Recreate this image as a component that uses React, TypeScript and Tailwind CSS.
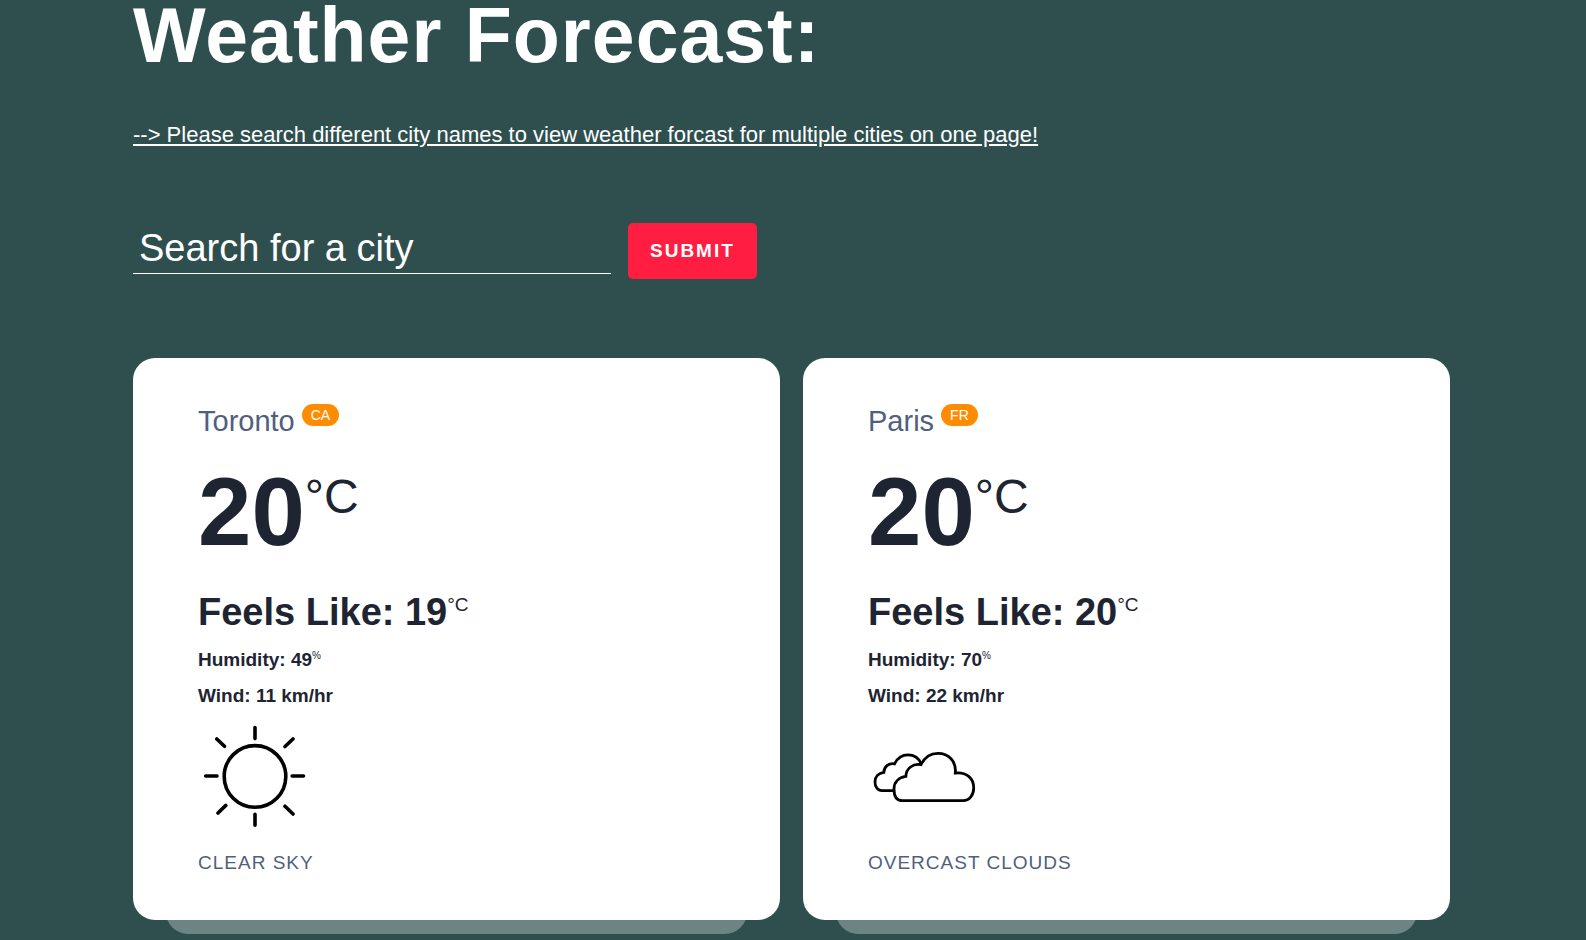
import React from 'react';

type Condition = 'clear' | 'clouds';

interface City {
  name: string;
  country: string;
  temp: number;
  feelsLike: number;
  humidity: number;
  wind: number;
  condition: Condition;
  description: string;
}

const cities: City[] = [
  {
    name: 'Toronto',
    country: 'CA',
    temp: 20,
    feelsLike: 19,
    humidity: 49,
    wind: 11,
    condition: 'clear',
    description: 'clear sky',
  },
  {
    name: 'Paris',
    country: 'FR',
    temp: 20,
    feelsLike: 20,
    humidity: 70,
    wind: 22,
    condition: 'clouds',
    description: 'overcast clouds',
  },
];

function SunIcon() {
  return (
    <svg
      viewBox="0 0 115 115"
      className="size-[115px]"
      fill="none"
      stroke="#000"
      strokeWidth="3.6"
      strokeLinecap="round"
      aria-hidden="true"
    >
      <circle cx="57" cy="57.4" r="30.8" />
      <path d="M57 8.6V19.6M57 95.2V106.2M7.7 57H19M94.2 57H105.5M18.8 20L26.5 27.3M95 20L87 27.5M20 94L27.8 86.4M87 87.2L95 95" />
    </svg>
  );
}

function CloudsIcon() {
  return (
    <svg
      viewBox="0 0 115 115"
      className="size-[115px]"
      fill="none"
      stroke="#000"
      strokeWidth="2.8"
      strokeLinejoin="miter"
      aria-hidden="true"
    >
      <path d="M26 71.7H14C9.5 71.7 7 67.4 7 62.9C7 57.9 10.5 54.1 15.8 53.4C16 47.9 20.5 43.8 26.5 44.9C29.5 38.9 34.5 35.9 40 35.9C45.5 35.9 50.5 38.9 53 44.4" />
      <path d="M34.5 81.7H95C101.5 81.7 105.7 75.9 105.7 68.9C105.7 59.4 98.5 52.7 87.3 54C88.5 42.4 80.5 34.3 70 34.3C62.5 34.3 56.5 38.4 53 45.7C45 44.2 38 49.4 37.9 57.4C31 58.4 26 62.9 26 69.9C26 76.9 28.5 81.7 34.5 81.7Z" />
    </svg>
  );
}

function CityCard({ city }: { city: City }) {
  return (
    <li className="relative rounded-[22px] bg-white px-[65px] pt-[45px] pb-[46px] text-[#1e2432] after:absolute after:inset-x-[33px] after:-bottom-3.5 after:-z-10 after:h-12 after:rounded-[22px] after:bg-white/30 after:content-['']">
      <h2 className="flex items-start gap-[7px] text-[29px] leading-9 text-[#4f5f80]">
        <span>{city.name}</span>
        <span className="mt-px rounded-full bg-[#ff8c00] px-[9px] text-sm leading-[22px] text-white">
          {city.country}
        </span>
      </h2>
      <p className="mt-[19px] flex items-start text-[96px] leading-[108px] font-bold">
        <span>{city.temp}</span>
        <span className="text-[48px] leading-[78px] font-normal">°C</span>
      </p>
      <h3 className="mt-6 flex items-start text-[38px] leading-[44px] font-bold">
        <span>Feels Like: {city.feelsLike}</span>
        <span className="text-[19px] leading-[30px] font-normal">°C</span>
      </h3>
      <p className="mt-[15px] flex items-start text-[19px] leading-[22px] font-bold">
        <span>Humidity: {city.humidity}</span>
        <span className="text-[10px] leading-[14px] font-normal">%</span>
      </p>
      <p className="mt-[14px] text-[19px] leading-[22px] font-bold">Wind: {city.wind} km/hr</p>
      <div className="mt-3">{city.condition === 'clear' ? <SunIcon /> : <CloudsIcon />}</div>
      <p className="mt-[18px] text-[19px] leading-[22px] tracking-[1px] text-[#4f5f80] uppercase">
        {city.description}
      </p>
    </li>
  );
}

export default function App() {
  return (
    <div className="min-h-screen bg-[#2f4f4f] pr-[136px] pb-5 pl-[133px] font-['Liberation_Sans',Arial,sans-serif] text-white">
      <h1 className="text-[77px] leading-[70px] font-bold tracking-[1px]">Weather Forecast:</h1>
      <p className="mt-[52px] text-[22px] leading-[26px] underline">
        --&gt; Please search different city names to view weather forcast for multiple cities on one page!
      </p>
      <form className="mt-[75px] flex items-start gap-[17px]" onSubmit={(e) => e.preventDefault()}>
        <input
          type="text"
          aria-label="City"
          placeholder="Search for a city"
          className="h-[51px] w-[478px] border-b border-white bg-transparent px-[6px] text-[38px] text-white outline-none placeholder:text-white"
        />
        <button
          type="submit"
          className="h-14 rounded-[5px] bg-[#ff1e42] px-[22px] text-[19px] font-bold tracking-[2px] uppercase"
        >
          Submit
        </button>
      </form>
      <ul className="isolate mt-[79px] grid grid-cols-2 gap-[23px]">
        {cities.map((city) => (
          <CityCard key={city.name} city={city} />
        ))}
      </ul>
    </div>
  );
}
